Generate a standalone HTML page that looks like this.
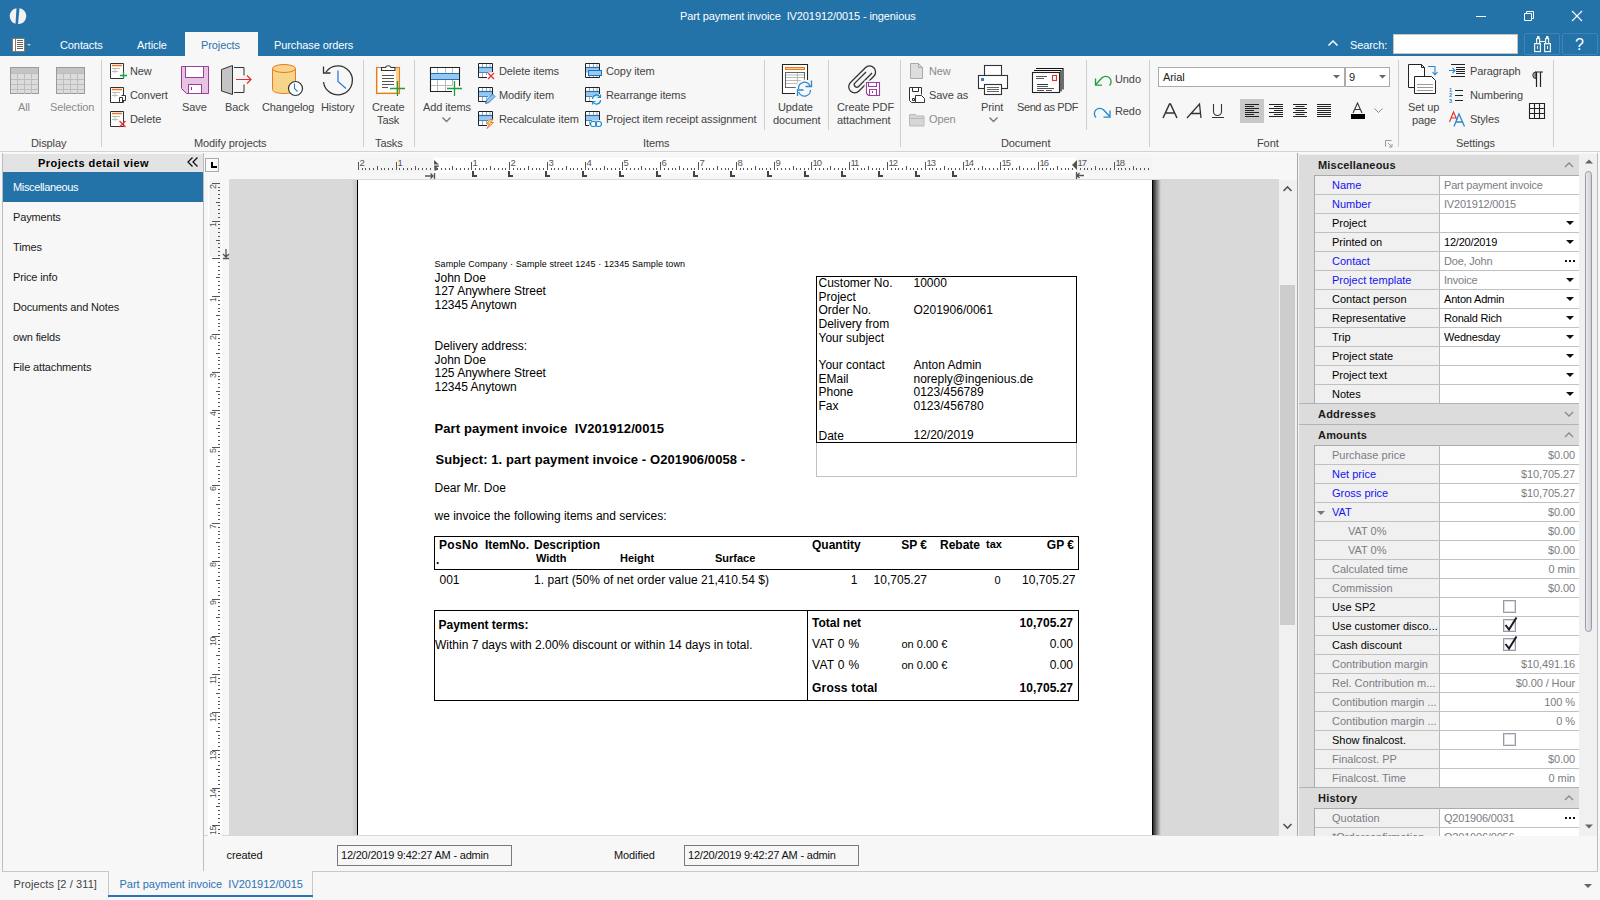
<!DOCTYPE html>
<html><head><meta charset="utf-8">
<style>
*{box-sizing:border-box;margin:0;padding:0}
html,body{width:1600px;height:900px;overflow:hidden;background:#f7f7f7;font-family:"Liberation Sans",sans-serif;font-size:11px;line-height:13px;color:#444;letter-spacing:-0.1px}
.a{position:absolute;white-space:nowrap}
svg{position:absolute;overflow:visible}
.w{color:#fff}
.sep{position:absolute;width:1px;background:#d0d0d0;top:60px}
.gl{position:absolute;top:137px;white-space:nowrap;color:#444}
.bk{color:#000}
</style></head><body>
<!-- ============ TITLE BAR ============ -->
<div class="a" style="left:0;top:0;width:1600px;height:56px;background:#2373a9"></div>
<svg style="left:10px;top:8px" width="16" height="16" viewBox="0 0 16 16"><path d="M6.5 0.2 A8 8 0 0 0 5.5 15.8 Z" fill="#f2f2f2"/><path d="M9.5 0.2 A8 8 0 0 1 10.5 15.8 L8 15.9 Z" fill="#f2f2f2"/></svg>
<div class="a w" style="left:680px;top:10px">Part payment invoice&nbsp; IV201912/0015 - ingenious</div>
<svg style="left:1476px;top:16px" width="10" height="1"><rect width="10" height="1" fill="#fff"/></svg>
<svg style="left:1524px;top:11px" width="10" height="10"><path d="M0.5 2.5h7v7h-7z M2.5 2.5v-2h7v7h-2" fill="none" stroke="#fff"/></svg>
<svg style="left:1572px;top:11px" width="10" height="10"><path d="M0 0L10 10M10 0L0 10" stroke="#fff" stroke-width="1.1"/></svg>
<!-- tabs -->
<svg style="left:12px;top:38px" width="20" height="14"><rect x="0.5" y="0.5" width="12" height="13" fill="#fff" stroke="#857a70"/><path d="M3.5 1v12" stroke="#857a70"/><path d="M5 2.5h6M5 4.5h6M5 6.5h6M5 8.5h6M5 10.5h6" stroke="#6a625a"/><path d="M15 6h4l-2 2z" fill="#d0c8c0"/></svg>
<div class="a" style="left:185px;top:32px;width:73px;height:24px;background:#f7f7f7"></div>
<div class="a w" style="left:60px;top:39px">Contacts</div>
<div class="a w" style="left:137px;top:39px">Article</div>
<div class="a" style="left:201px;top:39px;color:#2a72b0">Projects</div>
<div class="a w" style="left:274px;top:39px">Purchase orders</div>
<svg style="left:1328px;top:40px" width="10" height="6"><path d="M0.5 5.5L5 1L9.5 5.5" fill="none" stroke="#fff" stroke-width="1.5"/></svg>
<div class="a w" style="left:1350px;top:39px">Search:</div>
<div class="a" style="left:1393px;top:34px;width:125px;height:20px;background:#fff;border:1px solid #c9c3bd"></div>
<div class="a" style="left:1524px;top:33px;width:36px;height:22px;border:1px solid #4282b8;border-radius:2px"></div>
<div class="a" style="left:1562px;top:33px;width:36px;height:22px;border:1px solid #4282b8;border-radius:2px"></div>
<svg style="left:1534px;top:36px" width="17" height="16"><rect x="0.6" y="7.6" width="5.8" height="8" fill="none" stroke="#f4efe8" stroke-width="1.2"/><rect x="10.6" y="7.6" width="5.8" height="8" fill="none" stroke="#f4efe8" stroke-width="1.2"/><rect x="2.6" y="2.6" width="3" height="5" fill="none" stroke="#f4efe8" stroke-width="1.2"/><rect x="11.6" y="2.6" width="3" height="5" fill="none" stroke="#f4efe8" stroke-width="1.2"/><rect x="3" y="0" width="2.5" height="2" fill="#f4efe8"/><rect x="12" y="0" width="2.5" height="2" fill="#f4efe8"/><rect x="3" y="10" width="1" height="3" fill="#f4efe8"/><rect x="13" y="10" width="1" height="3" fill="#f4efe8"/><path d="M6 5.5h5" stroke="#f4efe8" stroke-width="1.1"/></svg>
<div class="a w" style="left:1575px;top:36px;font-size:16px;line-height:18px">?</div>

<!-- ============ RIBBON ============ -->
<div class="a" style="left:0;top:151px;width:1600px;height:1px;background:#d3d3d3"></div>
<div class="a" style="left:0;top:152px;width:1600px;height:1px;background:#fafafa"></div>
<!-- separators -->
<div class="sep" style="left:101px;height:87px"></div>
<div class="sep" style="left:363px;height:87px"></div>
<div class="sep" style="left:414px;height:87px"></div>
<div class="sep" style="left:764px;height:70px"></div>
<div class="sep" style="left:828px;height:70px"></div>
<div class="sep" style="left:900px;height:87px"></div>
<div class="sep" style="left:1086px;height:70px"></div>
<div class="sep" style="left:1149px;height:87px"></div>
<div class="sep" style="left:1398px;height:87px"></div>
<div class="sep" style="left:1553px;height:87px"></div>
<!-- group labels -->
<div class="gl" style="left:31px">Display</div>
<div class="gl" style="left:194px">Modify projects</div>
<div class="gl" style="left:375px">Tasks</div>
<div class="gl" style="left:643px">Items</div>
<div class="gl" style="left:1001px">Document</div>
<div class="gl" style="left:1257px">Font</div>
<div class="gl" style="left:1456px">Settings</div>
<svg style="left:1385px;top:140px" width="8" height="8"><path d="M0.5 6.5v-6h6" fill="none" stroke="#999"/><path d="M3 3l4 4M4 7h3v-3" fill="none" stroke="#999"/></svg>

<!-- Display -->
<svg style="left:10px;top:67px" width="29" height="28"><rect x="0.5" y="0.5" width="28" height="26" fill="#dcdcdc" stroke="#9a9a9a"/><rect x="1" y="1" width="27" height="5" fill="#c4c4c4"/><path d="M1 6.5h27M1 12.5h27M1 17.5h27M1 22.5h27M7.5 6v21M14.5 6v21M21.5 6v21" stroke="#bdbdbd"/></svg>
<svg style="left:56px;top:67px" width="29" height="28"><rect x="0.5" y="0.5" width="28" height="26" fill="#dcdcdc" stroke="#9a9a9a"/><rect x="1" y="1" width="27" height="5" fill="#c4c4c4"/><path d="M1 6.5h27M1 12.5h27M1 17.5h27M1 22.5h27M7.5 6v21M14.5 6v21M21.5 6v21" stroke="#bdbdbd"/></svg>
<div class="a" style="left:18px;top:101px;color:#8a8a8a">All</div>
<div class="a" style="left:50px;top:101px;color:#8a8a8a">Selection</div>

<!-- Modify projects small -->
<svg style="left:110px;top:63px" width="17" height="17"><path d="M0.5 0.5h13v15h-13z" fill="#fff" stroke="#333"/><path d="M2 2.5h10" stroke="#e8782a" stroke-width="1.5"/><path d="M2 5.5h8M2 8.5h6M5 5v5" stroke="#bbb"/><path d="M10 12.5h7M13.5 9v7" stroke="#1e9e3e" stroke-width="1.3"/></svg>
<svg style="left:110px;top:87px" width="17" height="17"><path d="M0.5 0.5h13v15h-13z" fill="#fff" stroke="#333"/><path d="M2 2.5h10" stroke="#e8782a" stroke-width="1.5"/><path d="M2 5.5h8M2 8.5h6M5 5v5" stroke="#bbb"/><path d="M9.5 10.5h3v5h-3z M11.5 8.5h4v5h-3" fill="#fff" stroke="#333"/></svg>
<svg style="left:110px;top:111px" width="17" height="17"><path d="M0.5 0.5h13v15h-13z" fill="#fff" stroke="#333"/><path d="M2 2.5h10" stroke="#e8782a" stroke-width="1.5"/><path d="M2 5.5h8M2 8.5h6M5 5v5" stroke="#bbb"/><path d="M9.5 10l6 6M15.5 10l-6 6" stroke="#e52b2b" stroke-width="1.2"/></svg>
<div class="a" style="left:130px;top:65px">New</div>
<div class="a" style="left:130px;top:89px">Convert</div>
<div class="a" style="left:130px;top:113px">Delete</div>
<!-- Save -->
<svg style="left:181px;top:66px" width="28" height="28"><path d="M0.5 0.5h27v27h-22l-5-5z" fill="#e6c4e2" stroke="#9b3d9b"/><rect x="4.5" y="0.5" width="18" height="11" fill="#fff" stroke="#9b3d9b"/><rect x="7.5" y="18.5" width="13" height="9" fill="#fff" stroke="#9b3d9b"/><path d="M10.5 21v3" stroke="#555"/></svg>
<div class="a" style="left:182px;top:101px">Save</div>
<!-- Back -->
<svg style="left:221px;top:65px" width="32" height="30"><path d="M0.5 4.5l11-4v29l-11-3.5z" fill="#c4c4c4" stroke="#333"/><path d="M13 2.5h10v8M23 19.5v8h-10" fill="none" stroke="#333"/><path d="M15 14.5h15M26 10.5l4 4l-4 4" fill="none" stroke="#e52b2b" stroke-width="1.2"/></svg>
<div class="a" style="left:225px;top:101px">Back</div>
<!-- Changelog -->
<svg style="left:272px;top:64px" width="32" height="32"><path d="M0.5 4.5v21c0 2.5 5 4 11.5 4s11.5-1.5 11.5-4v-21" fill="#f6d488" stroke="#e8782a"/><ellipse cx="12" cy="4.5" rx="11.5" ry="4" fill="#f6d488" stroke="#e8782a"/><circle cx="23.5" cy="24.5" r="7" fill="#fff" stroke="#333" stroke-width="1.2"/><path d="M22.5 19.5v5l3 3" fill="none" stroke="#2a7fd0" stroke-width="1.1"/></svg>
<div class="a" style="left:262px;top:101px">Changelog</div>
<!-- History -->
<svg style="left:322px;top:64px" width="32" height="32"><path d="M4 8A14.5 14.5 0 1 1 1.5 18" fill="none" stroke="#333" stroke-width="1.3"/><path d="M1.5 2.5v6.5h7" fill="none" stroke="#333" stroke-width="1.3"/><path d="M16 6.5v11l8 7" fill="none" stroke="#2a7fd0" stroke-width="1.3"/></svg>
<div class="a" style="left:321px;top:101px">History</div>
<!-- Create Task -->
<svg style="left:370px;top:58px" width="40" height="42"><rect x="6.5" y="9.5" width="23" height="26" fill="#f6d488" stroke="#e8782a" stroke-width="1.1"/><rect x="8" y="10" width="18" height="24" fill="#fff"/><path d="M11.5 12.5v-3h4a3 3 0 0 1 5.5 0h4v3z" fill="#fff" stroke="#333" stroke-width="1.1"/><path d="M12 17.5h12M12 20.5h12M12 23.5h12M12 26.5h12M12 29.5h6" stroke="#555"/><rect x="18" y="28" width="10" height="10" fill="#fff" opacity="0"/><path d="M20 30.5h15M27.5 23v15" stroke="#1e9e3e" stroke-width="1.3"/></svg>
<div class="a" style="left:372px;top:101px">Create</div>
<div class="a" style="left:377px;top:114px">Task</div>
<!-- Add items -->
<svg style="left:430px;top:67px" width="34" height="32"><path d="M22 24.5H0.5V0.5H29.5V19" fill="#fff" stroke="#222" stroke-width="1.1"/><path d="M7.5 1v5M15.5 1v5M22.5 1v5M7.5 13v11M15.5 13v11M22.5 13v6M1 18.5h22" stroke="#bbb"/><rect x="1" y="6.5" width="28" height="6" fill="#99c8ee"/><path d="M1 6.5h28M1 12.5h28" stroke="#1e72c0" stroke-width="1.2"/><path d="M17 21.5h15M24.5 14v15" stroke="#1e9e3e" stroke-width="1.3"/></svg>
<div class="a" style="left:423px;top:101px">Add items</div>
<svg style="left:442px;top:117px" width="9" height="6"><path d="M0.5 0.5l4 4l4-4" fill="none" stroke="#777" stroke-width="1.4"/></svg>
<!-- items small icons -->
<svg style="left:478px;top:63px" width="17" height="17"><path d="M9 14.5H0.5V0.5H14.5V9" fill="#fff" stroke="#222"/><path d="M4.5 1v3M8.5 1v3M12 1v3M4.5 10v4M8.5 10v2" stroke="#aaa"/><rect x="1" y="4.5" width="13" height="5" fill="#99c8ee"/><path d="M1 4.5h13" stroke="#1e72c0" stroke-width="1.2"/><path d="M1 9.5h9" stroke="#1e72c0" stroke-width="0.8"/><path d="M10 10l6 6M16 10l-6 6" stroke="#e52b2b" stroke-width="1.2"/></svg>
<svg style="left:478px;top:87px" width="17" height="17"><path d="M9 14.5H0.5V0.5H14.5V9" fill="#fff" stroke="#222"/><path d="M4.5 1v3M8.5 1v3M12 1v3M4.5 10v4M8.5 10v2" stroke="#aaa"/><rect x="1" y="4.5" width="13" height="5" fill="#99c8ee"/><path d="M1 4.5h13" stroke="#1e72c0" stroke-width="1.2"/><path d="M1 9.5h9" stroke="#1e72c0" stroke-width="0.8"/><path d="M7.5 16.5l1-3.5l6-6l2.5 2.5l-6 6z" fill="#99c8ee" stroke="#1e72c0" stroke-width="0.9"/></svg>
<svg style="left:478px;top:111px" width="17" height="17"><path d="M9 14.5H0.5V0.5H14.5V9" fill="#fff" stroke="#222"/><path d="M4.5 1v3M8.5 1v3M12 1v3M4.5 10v4M8.5 10v2" stroke="#aaa"/><rect x="1" y="4.5" width="13" height="5" fill="#99c8ee"/><path d="M1 4.5h13" stroke="#1e72c0" stroke-width="1.2"/><path d="M1 9.5h9" stroke="#1e72c0" stroke-width="0.8"/><path d="M12 8.5l-3.5 4.5h3l-2.5 4.5l6.5-6h-3l2.5-3z" fill="#f6d488" stroke="#e8782a" stroke-width="0.9"/></svg>
<div class="a" style="left:499px;top:65px">Delete items</div>
<div class="a" style="left:499px;top:89px">Modify item</div>
<div class="a" style="left:499px;top:113px">Recalculate item</div>
<svg style="left:585px;top:63px" width="18" height="17"><path d="M0.5 0.5H14.5V14.5H0.5Z" fill="#fff" stroke="#222"/><path d="M4.5 1v3M8.5 1v3M12 1v3M4.5 11v3M8.5 12v2M12 12v2" stroke="#aaa"/><rect x="1" y="4.5" width="13" height="5" fill="#99c8ee"/><path d="M1 4.5h13" stroke="#1e72c0" stroke-width="1.2"/><rect x="3.5" y="7.5" width="13" height="5" fill="#99c8ee" stroke="#1e72c0"/></svg>
<svg style="left:585px;top:87px" width="18" height="17"><path d="M7 14.5H0.5V0.5H14.5V7" fill="#fff" stroke="#222"/><path d="M4.5 1v3M8.5 1v3M12 1v3M4.5 10v4" stroke="#aaa"/><rect x="1" y="4.5" width="13" height="5" fill="#99c8ee"/><path d="M1 4.5h13" stroke="#1e72c0" stroke-width="1.2"/><path d="M1 9.5h6" stroke="#1e72c0" stroke-width="0.8"/><path d="M7.5 12A4 4 0 0 1 15 10" fill="none" stroke="#1e88d0" stroke-width="1.2"/><path d="M12.5 10.5h3v-3" fill="none" stroke="#1e88d0" stroke-width="1.1"/><path d="M15.5 13A4 4 0 0 1 8 15" fill="none" stroke="#1e88d0" stroke-width="1.2"/><path d="M10.5 14.5h-3v3" fill="none" stroke="#1e88d0" stroke-width="1.1"/></svg>
<svg style="left:585px;top:111px" width="18" height="17"><path d="M4 14.5H0.5V0.5H14.5V9" fill="#fff" stroke="#222"/><path d="M4.5 1v3M8.5 1v3M12 1v3M4.5 10v4" stroke="#aaa"/><rect x="1" y="4.5" width="13" height="5" fill="#99c8ee"/><path d="M1 4.5h13" stroke="#1e72c0" stroke-width="1.2"/><path d="M1 9.5h6" stroke="#1e72c0" stroke-width="0.8"/><rect x="5.5" y="10.5" width="6" height="5" rx="2.5" fill="#fff" stroke="#1e88d0" stroke-width="1.1"/><rect x="10.5" y="10.5" width="6" height="5" rx="2.5" fill="none" stroke="#1e88d0" stroke-width="1.1"/></svg>
<div class="a" style="left:606px;top:65px">Copy item</div>
<div class="a" style="left:606px;top:89px">Rearrange items</div>
<div class="a" style="left:606px;top:113px">Project item receipt assignment</div>
<!-- Update document -->
<svg style="left:782px;top:64px" width="32" height="33"><path d="M13 29.5H0.5V0.5H25.5V16" fill="#fff" stroke="#222" stroke-width="1.1"/><rect x="1" y="1" width="24" height="28" fill="#fff"/><rect x="3.5" y="3.5" width="19" height="2" fill="#f6d488" stroke="#e8782a"/><rect x="3.5" y="8.5" width="19" height="15" fill="#fff" stroke="#666"/><path d="M4 11h18M4 13.5h18M4 16.5h18M4 19.5h18M15.5 9v14" stroke="#bbb"/><circle cx="22.5" cy="24.5" r="9" fill="#f7f7f7"/><path d="M16.5 25A6 6 0 0 1 28.2 22.5" fill="none" stroke="#2a88d0" stroke-width="1.3"/><path d="M23.5 22.5H29.5V16.5" fill="none" stroke="#2a88d0" stroke-width="1.3"/><path d="M28.5 26A6 6 0 0 1 16.8 28" fill="none" stroke="#2a88d0" stroke-width="1.3"/><path d="M15.5 32V26H21.5" fill="none" stroke="#2a88d0" stroke-width="1.3"/></svg>
<div class="a" style="left:778px;top:101px">Update</div>
<div class="a" style="left:773px;top:114px">document</div>
<!-- Create PDF attachment -->
<svg style="left:850px;top:64px" width="32" height="33"><g transform="translate(12.5,15) rotate(45) translate(-6.5,-16.5)"><rect x="0.5" y="0.5" width="12" height="33" rx="6" fill="none" stroke="#333" stroke-width="1.3"/><path d="M4 9V24.5A2.5 2.5 0 0 0 9 24.5V5.5" fill="none" stroke="#333" stroke-width="1.3"/></g><path d="M15.5 17.5h14.5v14.5h-12.5l-2-2z" fill="#f7f7f7" stroke="#f7f7f7" stroke-width="2"/><path d="M16.5 18.5h13v13h-11l-2-2z" fill="#fff" stroke="#9b3d9b" stroke-width="1.1"/><rect x="18.5" y="18.5" width="8" height="4" fill="none" stroke="#9b3d9b"/><rect x="19.5" y="25.5" width="7" height="6" fill="none" stroke="#9b3d9b"/><rect x="22" y="27" width="1" height="2" fill="#9b3d9b"/></svg>
<div class="a" style="left:837px;top:101px">Create PDF</div>
<div class="a" style="left:837px;top:114px">attachment</div>
<!-- Document small -->
<svg style="left:910px;top:63px" width="17" height="17"><path d="M0.5 0.5h8l4 4v11h-12z" fill="#ddd" stroke="#aaa"/><path d="M8.5 0.5v4h4" fill="none" stroke="#aaa"/></svg>
<svg style="left:909px;top:87px" width="17" height="17"><path d="M0.5 0.5h12v7M0.5 0.5v13l2 2h4" fill="#fff" stroke="#333"/><path d="M3.5 0.5v4h6v-4" fill="none" stroke="#333"/><path d="M6.5 8.5h6l3 3v4h-9z" fill="#fff" stroke="#333"/><path d="M3.5 11.5h2v2h-2z" fill="none" stroke="#333"/></svg>
<svg style="left:909px;top:111px" width="17" height="17"><path d="M0.5 3.5h6l1.5 1.5h7v10h-14.5z" fill="#d6d6d6" stroke="#bbb"/><path d="M0.5 7.5h14.5" stroke="#bbb"/></svg>
<div class="a" style="left:929px;top:65px;color:#8a8a8a">New</div>
<div class="a" style="left:929px;top:89px">Save as</div>
<div class="a" style="left:929px;top:113px;color:#8a8a8a">Open</div>
<!-- Print -->
<svg style="left:978px;top:65px" width="31" height="31"><rect x="6.5" y="0.5" width="17" height="10" fill="#fff" stroke="#333" stroke-width="1.1"/><rect x="0.5" y="10.5" width="29" height="13" fill="#fff" stroke="#333" stroke-width="1.1"/><rect x="3" y="13" width="3" height="3" fill="#2a7fd0"/><rect x="6.5" y="19.5" width="17" height="10" fill="#fff" stroke="#333" stroke-width="1.1"/><path d="M9 22.5h12M9 24.5h12M9 26.5h12" stroke="#666"/></svg>
<div class="a" style="left:981px;top:101px">Print</div>
<svg style="left:989px;top:117px" width="9" height="6"><path d="M0.5 0.5l4 4l4-4" fill="none" stroke="#777" stroke-width="1.4"/></svg>
<!-- Send as PDF -->
<svg style="left:1031px;top:66px" width="34" height="28"><path d="M5 2.5h27v21" fill="none" stroke="#111" stroke-width="1.2"/><path d="M3 4.5h27v21" fill="none" stroke="#111" stroke-width="1.2"/><rect x="1.5" y="6.5" width="27" height="20" fill="#fff" stroke="#222" stroke-width="1.1"/><path d="M5 10.5h11M5 12.5h8M6 20.5h11M6 22.5h17M6 24.5h7M15 24.5h6" stroke="#555"/><path d="M6 18.5h11" stroke="#333"/><rect x="21.5" y="9.5" width="4" height="5" fill="none" stroke="#e52b2b" stroke-width="1.1"/></svg>
<div class="a" style="left:1017px;top:101px;letter-spacing:-0.4px">Send as PDF</div>
<!-- Undo/Redo -->
<svg style="left:1094px;top:74px" width="18" height="14"><path d="M15.5 11.5A4.6 4.6 0 0 0 8 3.8L1.8 10.5" fill="none" stroke="#1e9e3e" stroke-width="1.3"/><path d="M1.5 4.5V11.2H8" fill="none" stroke="#1e9e3e" stroke-width="1.3"/></svg>
<svg style="left:1094px;top:106px" width="18" height="14"><path d="M2 11.5A4.6 4.6 0 0 1 9.5 3.8L15.7 10.5" fill="none" stroke="#1e88d0" stroke-width="1.3"/><path d="M16 4.5V11.2H9.5" fill="none" stroke="#1e88d0" stroke-width="1.3"/></svg>
<div class="a" style="left:1115px;top:73px">Undo</div>
<div class="a" style="left:1115px;top:105px">Redo</div>
<!-- Font group -->
<div class="a" style="left:1158px;top:67px;width:187px;height:20px;background:#fff;border:1px solid #ababab"></div>
<div class="a" style="left:1345px;top:67px;width:45px;height:20px;background:#fff;border:1px solid #ababab"></div>
<div class="a" style="left:1163px;top:71px;color:#222">Arial</div>
<div class="a" style="left:1349px;top:71px;color:#222">9</div>
<svg style="left:1333px;top:75px" width="7" height="4"><path d="M0 0h7l-3.5 3.5z" fill="#666"/></svg>
<svg style="left:1379px;top:75px" width="7" height="4"><path d="M0 0h7l-3.5 3.5z" fill="#666"/></svg>
<div class="a" style="left:1240px;top:99px;width:24px;height:24px;background:#c8c8c8"></div>
<svg style="left:1162px;top:103px" width="16" height="16"><path d="M1 15L7.5 1h1L15 15M4 10h8" fill="none" stroke="#333" stroke-width="1.5"/></svg>
<svg style="left:1186px;top:103px" width="16" height="16"><path d="M1 15L13.5 1L15 15M5 10.5h9" fill="none" stroke="#333" stroke-width="1.3"/></svg>
<svg style="left:1211px;top:104px" width="14" height="15"><path d="M2.5 0v7.5a4 4 0 0 0 8 0v-7.5" fill="none" stroke="#333" stroke-width="1.1"/><path d="M1 13.5h12" stroke="#333"/></svg>
<svg style="left:1245px;top:104px" width="15" height="13"><path d="M0 0.5h14M0 2.5h9M0 4.5h14M0 6.5h9M0 8.5h14M0 10.5h9M0 12.5h14" stroke="#222"/></svg>
<svg style="left:1269px;top:104px" width="15" height="13"><path d="M0 0.5h14M5 2.5h9M0 4.5h14M5 6.5h9M0 8.5h14M5 10.5h9M0 12.5h14" stroke="#222"/></svg>
<svg style="left:1293px;top:104px" width="15" height="13"><path d="M0 0.5h14M2.5 2.5h9M0 4.5h14M2.5 6.5h9M0 8.5h14M2.5 10.5h9M0 12.5h14" stroke="#222"/></svg>
<svg style="left:1317px;top:104px" width="15" height="13"><path d="M0 0.5h14M0 2.5h14M0 4.5h14M0 6.5h14M0 8.5h14M0 10.5h14M0 12.5h14" stroke="#222"/></svg>
<svg style="left:1350px;top:102px" width="16" height="18"><path d="M3 11L7.5 1L12 11M5 7.5h5" fill="none" stroke="#333" stroke-width="1.1"/><rect x="1" y="12" width="14" height="5" fill="#000"/></svg>
<svg style="left:1374px;top:108px" width="9" height="5"><path d="M0.5 0.5l4 4l4-4" fill="none" stroke="#888"/></svg>
<!-- Settings -->
<svg style="left:1408px;top:64px" width="32" height="32"><path d="M0.5 0.5h13l3 3v20h-16z" fill="#fff" stroke="#222"/><path d="M13.5 0.5v3h3" fill="none" stroke="#222"/><path d="M6.5 12.5h17l4 4v13h-21z" fill="#fff" stroke="#222"/><path d="M9 20.5h16M9 23.5h16M9 26.5h16" stroke="#999"/><path d="M20 2.5h7v8M24.5 8l2.5 3l2.5-3" fill="none" stroke="#2a88d0" stroke-width="1.1"/></svg>
<div class="a" style="left:1408px;top:101px">Set up</div>
<div class="a" style="left:1412px;top:114px">page</div>
<svg style="left:1449px;top:63px" width="17" height="15"><path d="M2 1.5h14M7 4.5h9M7 6.5h9M7 8.5h9M7 10.5h9M2 13.5h14" stroke="#222"/><path d="M0 7.5h6M3.5 5l2.5 2.5l-2.5 2.5" fill="none" stroke="#2a88d0" stroke-width="1.1"/></svg>
<svg style="left:1449px;top:87px" width="16" height="16"><path d="M6 3.5h8M6 8.5h8M6 13.5h8" stroke="#222" stroke-width="1.2"/><text x="0" y="5" font-size="5.5" fill="#2a88d0" font-family="Liberation Sans" font-weight="bold">1</text><text x="0" y="10" font-size="5.5" fill="#2a88d0" font-family="Liberation Sans" font-weight="bold">2</text><text x="0" y="15.5" font-size="5.5" fill="#2a88d0" font-family="Liberation Sans" font-weight="bold">3</text></svg>
<svg style="left:1449px;top:111px" width="17" height="16"><path d="M0.5 11L4.5 1L8 9M2 7h5" fill="none" stroke="#e52b2b" stroke-width="1.1"/><path d="M5 15.5L10 3L15.5 15.5M7 11h7" fill="none" stroke="#2a88d0" stroke-width="1.3"/></svg>
<div class="a" style="left:1470px;top:65px">Paragraph</div>
<div class="a" style="left:1470px;top:89px">Numbering</div>
<div class="a" style="left:1470px;top:113px">Styles</div>
<svg style="left:1531px;top:71px" width="13" height="17"><path d="M4 1h8M5.5 1v15M9.5 1v15" fill="none" stroke="#222" stroke-width="1.2"/><path d="M5 1a3.3 3.3 0 0 0 0 6.6z" fill="#999" stroke="#222" stroke-width="0.8"/></svg>
<svg style="left:1529px;top:103px" width="16" height="16"><path d="M0.5 0.5h15v15h-15zM5.5 0.5v15M10.5 0.5v15M0.5 5.5h15M0.5 10.5h15" fill="none" stroke="#222" stroke-width="1.1"/></svg>
<div class="a" style="left:2px;top:153px;width:1px;height:718px;background:#bdbdbd;"></div>
<div class="a" style="left:203px;top:153px;width:1px;height:718px;background:#bdbdbd;"></div>
<div class="a" style="left:3px;top:154px;width:200px;height:18px;background:#e3e3e3;"></div>
<div class="a" style="left:3px;top:172px;width:200px;height:30px;background:#2373a9;"></div>
<div class="a" style="left:38px;top:163px;font-size:11px;line-height:0;color:#000;font-weight:bold;letter-spacing:0.45px">Projects detail view</div>
<svg style="left:187px;top:157px" width="12" height="11"><path d="M5.5 0.5L1 5L5.5 9.5M10.5 0.5L6 5L10.5 9.5" fill="none" stroke="#111" stroke-width="1.3"/></svg>
<div class="a" style="left:13px;top:187.19px;font-size:11px;line-height:0;color:#fff;letter-spacing:-0.35px">Miscellaneous</div>
<div class="a" style="left:13px;top:217.19px;font-size:11px;line-height:0;color:#1a1a1a;letter-spacing:-0.15px">Payments</div>
<div class="a" style="left:13px;top:247.19px;font-size:11px;line-height:0;color:#1a1a1a;letter-spacing:-0.15px">Times</div>
<div class="a" style="left:13px;top:277.19px;font-size:11px;line-height:0;color:#1a1a1a;letter-spacing:-0.15px">Price info</div>
<div class="a" style="left:13px;top:307.19px;font-size:11px;line-height:0;color:#1a1a1a;letter-spacing:-0.15px">Documents and Notes</div>
<div class="a" style="left:13px;top:337.19px;font-size:11px;line-height:0;color:#1a1a1a;letter-spacing:-0.15px">own fields</div>
<div class="a" style="left:13px;top:367.19px;font-size:11px;line-height:0;color:#1a1a1a;letter-spacing:-0.15px">File attachments</div>
<div class="a" style="left:205px;top:158px;width:14px;height:14px;border:1px solid #a8a8a8;background:#fafafa"></div>
<svg style="left:211px;top:162px" width="6" height="6"><path d="M0 0h2v4h4v2h-6z" fill="#000"/></svg>
<div class="a" style="left:229px;top:179px;width:1050px;height:656px;background:#d9d9d9;"></div>
<div class="a" style="left:204px;top:835px;width:1093px;height:1px;background:#d8d8d8;"></div>
<div class="a" style="left:351px;top:180px;width:6px;height:655px;background:linear-gradient(90deg,#d9d9d9,#c8c8c8)"></div>
<div class="a" style="left:358px;top:180px;width:794px;height:655px;background:#fff;"></div>
<div class="a" style="left:357px;top:180px;width:1px;height:655px;background:#000;"></div>
<div class="a" style="left:1152px;top:180px;width:1px;height:655px;background:#000;"></div>
<div class="a" style="left:1153px;top:180px;width:8px;height:655px;background:linear-gradient(90deg,#2a2a2a,#d9d9d9)"></div>
<div class="a" style="left:1279px;top:180px;width:18px;height:656px;background:#f0f0f0;"></div>
<div class="a" style="left:1280px;top:285px;width:15px;height:340px;background:#cdcdcd;"></div>
<svg style="left:1283px;top:186px" width="9" height="6"><path d="M0.5 5L4.5 1L8.5 5" fill="none" stroke="#555" stroke-width="1.6"/></svg>
<svg style="left:1283px;top:823px" width="9" height="6"><path d="M0.5 1L4.5 5L8.5 1" fill="none" stroke="#555" stroke-width="1.6"/></svg>
<div class="a" style="left:1297px;top:153px;width:1px;height:683px;background:#a6a6b2;"></div>
<div class="a" style="left:1298px;top:153px;width:1px;height:683px;background:#f4f4f4;"></div>
<div class="a" style="left:358px;top:158px;width:794px;height:15px;background:#f4f4f4;"></div>
<div class="a" style="left:433px;top:158px;width:643px;height:15px;background:#fff;"></div>
<svg style="left:0;top:0" width="1600" height="900">
<rect x="358" y="162" width="1" height="8" fill="#555"/>
<rect x="362" y="168" width="1" height="2" fill="#555"/>
<rect x="365" y="168" width="1" height="2" fill="#555"/>
<rect x="369" y="168" width="1" height="2" fill="#555"/>
<rect x="373" y="168" width="1" height="2" fill="#555"/>
<rect x="377" y="166" width="1" height="4" fill="#555"/>
<rect x="381" y="168" width="1" height="2" fill="#555"/>
<rect x="384" y="168" width="1" height="2" fill="#555"/>
<rect x="388" y="168" width="1" height="2" fill="#555"/>
<rect x="392" y="168" width="1" height="2" fill="#555"/>
<rect x="396" y="162" width="1" height="8" fill="#555"/>
<rect x="399" y="168" width="1" height="2" fill="#555"/>
<rect x="403" y="168" width="1" height="2" fill="#555"/>
<rect x="407" y="168" width="1" height="2" fill="#555"/>
<rect x="411" y="168" width="1" height="2" fill="#555"/>
<rect x="415" y="166" width="1" height="4" fill="#555"/>
<rect x="418" y="168" width="1" height="2" fill="#555"/>
<rect x="422" y="168" width="1" height="2" fill="#555"/>
<rect x="426" y="168" width="1" height="2" fill="#555"/>
<rect x="430" y="168" width="1" height="2" fill="#555"/>
<rect x="437" y="168" width="1" height="2" fill="#555"/>
<rect x="441" y="168" width="1" height="2" fill="#555"/>
<rect x="445" y="168" width="1" height="2" fill="#555"/>
<rect x="449" y="168" width="1" height="2" fill="#555"/>
<rect x="452" y="166" width="1" height="4" fill="#555"/>
<rect x="456" y="168" width="1" height="2" fill="#555"/>
<rect x="460" y="168" width="1" height="2" fill="#555"/>
<rect x="464" y="168" width="1" height="2" fill="#555"/>
<rect x="468" y="168" width="1" height="2" fill="#555"/>
<rect x="471" y="162" width="1" height="8" fill="#555"/>
<rect x="475" y="168" width="1" height="2" fill="#555"/>
<rect x="479" y="168" width="1" height="2" fill="#555"/>
<rect x="483" y="168" width="1" height="2" fill="#555"/>
<rect x="486" y="168" width="1" height="2" fill="#555"/>
<rect x="490" y="166" width="1" height="4" fill="#555"/>
<rect x="494" y="168" width="1" height="2" fill="#555"/>
<rect x="498" y="168" width="1" height="2" fill="#555"/>
<rect x="502" y="168" width="1" height="2" fill="#555"/>
<rect x="505" y="168" width="1" height="2" fill="#555"/>
<rect x="509" y="162" width="1" height="8" fill="#555"/>
<rect x="513" y="168" width="1" height="2" fill="#555"/>
<rect x="517" y="168" width="1" height="2" fill="#555"/>
<rect x="520" y="168" width="1" height="2" fill="#555"/>
<rect x="524" y="168" width="1" height="2" fill="#555"/>
<rect x="528" y="166" width="1" height="4" fill="#555"/>
<rect x="532" y="168" width="1" height="2" fill="#555"/>
<rect x="536" y="168" width="1" height="2" fill="#555"/>
<rect x="539" y="168" width="1" height="2" fill="#555"/>
<rect x="543" y="168" width="1" height="2" fill="#555"/>
<rect x="547" y="162" width="1" height="8" fill="#555"/>
<rect x="551" y="168" width="1" height="2" fill="#555"/>
<rect x="554" y="168" width="1" height="2" fill="#555"/>
<rect x="558" y="168" width="1" height="2" fill="#555"/>
<rect x="562" y="168" width="1" height="2" fill="#555"/>
<rect x="566" y="166" width="1" height="4" fill="#555"/>
<rect x="570" y="168" width="1" height="2" fill="#555"/>
<rect x="573" y="168" width="1" height="2" fill="#555"/>
<rect x="577" y="168" width="1" height="2" fill="#555"/>
<rect x="581" y="168" width="1" height="2" fill="#555"/>
<rect x="585" y="162" width="1" height="8" fill="#555"/>
<rect x="588" y="168" width="1" height="2" fill="#555"/>
<rect x="592" y="168" width="1" height="2" fill="#555"/>
<rect x="596" y="168" width="1" height="2" fill="#555"/>
<rect x="600" y="168" width="1" height="2" fill="#555"/>
<rect x="604" y="166" width="1" height="4" fill="#555"/>
<rect x="607" y="168" width="1" height="2" fill="#555"/>
<rect x="611" y="168" width="1" height="2" fill="#555"/>
<rect x="615" y="168" width="1" height="2" fill="#555"/>
<rect x="619" y="168" width="1" height="2" fill="#555"/>
<rect x="622" y="162" width="1" height="8" fill="#555"/>
<rect x="626" y="168" width="1" height="2" fill="#555"/>
<rect x="630" y="168" width="1" height="2" fill="#555"/>
<rect x="634" y="168" width="1" height="2" fill="#555"/>
<rect x="638" y="168" width="1" height="2" fill="#555"/>
<rect x="641" y="166" width="1" height="4" fill="#555"/>
<rect x="645" y="168" width="1" height="2" fill="#555"/>
<rect x="649" y="168" width="1" height="2" fill="#555"/>
<rect x="653" y="168" width="1" height="2" fill="#555"/>
<rect x="656" y="168" width="1" height="2" fill="#555"/>
<rect x="660" y="162" width="1" height="8" fill="#555"/>
<rect x="664" y="168" width="1" height="2" fill="#555"/>
<rect x="668" y="168" width="1" height="2" fill="#555"/>
<rect x="672" y="168" width="1" height="2" fill="#555"/>
<rect x="675" y="168" width="1" height="2" fill="#555"/>
<rect x="679" y="166" width="1" height="4" fill="#555"/>
<rect x="683" y="168" width="1" height="2" fill="#555"/>
<rect x="687" y="168" width="1" height="2" fill="#555"/>
<rect x="691" y="168" width="1" height="2" fill="#555"/>
<rect x="694" y="168" width="1" height="2" fill="#555"/>
<rect x="698" y="162" width="1" height="8" fill="#555"/>
<rect x="702" y="168" width="1" height="2" fill="#555"/>
<rect x="706" y="168" width="1" height="2" fill="#555"/>
<rect x="709" y="168" width="1" height="2" fill="#555"/>
<rect x="713" y="168" width="1" height="2" fill="#555"/>
<rect x="717" y="166" width="1" height="4" fill="#555"/>
<rect x="721" y="168" width="1" height="2" fill="#555"/>
<rect x="725" y="168" width="1" height="2" fill="#555"/>
<rect x="728" y="168" width="1" height="2" fill="#555"/>
<rect x="732" y="168" width="1" height="2" fill="#555"/>
<rect x="736" y="162" width="1" height="8" fill="#555"/>
<rect x="740" y="168" width="1" height="2" fill="#555"/>
<rect x="743" y="168" width="1" height="2" fill="#555"/>
<rect x="747" y="168" width="1" height="2" fill="#555"/>
<rect x="751" y="168" width="1" height="2" fill="#555"/>
<rect x="755" y="166" width="1" height="4" fill="#555"/>
<rect x="759" y="168" width="1" height="2" fill="#555"/>
<rect x="762" y="168" width="1" height="2" fill="#555"/>
<rect x="766" y="168" width="1" height="2" fill="#555"/>
<rect x="770" y="168" width="1" height="2" fill="#555"/>
<rect x="774" y="162" width="1" height="8" fill="#555"/>
<rect x="777" y="168" width="1" height="2" fill="#555"/>
<rect x="781" y="168" width="1" height="2" fill="#555"/>
<rect x="785" y="168" width="1" height="2" fill="#555"/>
<rect x="789" y="168" width="1" height="2" fill="#555"/>
<rect x="793" y="166" width="1" height="4" fill="#555"/>
<rect x="796" y="168" width="1" height="2" fill="#555"/>
<rect x="800" y="168" width="1" height="2" fill="#555"/>
<rect x="804" y="168" width="1" height="2" fill="#555"/>
<rect x="808" y="168" width="1" height="2" fill="#555"/>
<rect x="811" y="162" width="1" height="8" fill="#555"/>
<rect x="815" y="168" width="1" height="2" fill="#555"/>
<rect x="819" y="168" width="1" height="2" fill="#555"/>
<rect x="823" y="168" width="1" height="2" fill="#555"/>
<rect x="827" y="168" width="1" height="2" fill="#555"/>
<rect x="830" y="166" width="1" height="4" fill="#555"/>
<rect x="834" y="168" width="1" height="2" fill="#555"/>
<rect x="838" y="168" width="1" height="2" fill="#555"/>
<rect x="842" y="168" width="1" height="2" fill="#555"/>
<rect x="845" y="168" width="1" height="2" fill="#555"/>
<rect x="849" y="162" width="1" height="8" fill="#555"/>
<rect x="853" y="168" width="1" height="2" fill="#555"/>
<rect x="857" y="168" width="1" height="2" fill="#555"/>
<rect x="861" y="168" width="1" height="2" fill="#555"/>
<rect x="864" y="168" width="1" height="2" fill="#555"/>
<rect x="868" y="166" width="1" height="4" fill="#555"/>
<rect x="872" y="168" width="1" height="2" fill="#555"/>
<rect x="876" y="168" width="1" height="2" fill="#555"/>
<rect x="879" y="168" width="1" height="2" fill="#555"/>
<rect x="883" y="168" width="1" height="2" fill="#555"/>
<rect x="887" y="162" width="1" height="8" fill="#555"/>
<rect x="891" y="168" width="1" height="2" fill="#555"/>
<rect x="895" y="168" width="1" height="2" fill="#555"/>
<rect x="898" y="168" width="1" height="2" fill="#555"/>
<rect x="902" y="168" width="1" height="2" fill="#555"/>
<rect x="906" y="166" width="1" height="4" fill="#555"/>
<rect x="910" y="168" width="1" height="2" fill="#555"/>
<rect x="913" y="168" width="1" height="2" fill="#555"/>
<rect x="917" y="168" width="1" height="2" fill="#555"/>
<rect x="921" y="168" width="1" height="2" fill="#555"/>
<rect x="925" y="162" width="1" height="8" fill="#555"/>
<rect x="929" y="168" width="1" height="2" fill="#555"/>
<rect x="932" y="168" width="1" height="2" fill="#555"/>
<rect x="936" y="168" width="1" height="2" fill="#555"/>
<rect x="940" y="168" width="1" height="2" fill="#555"/>
<rect x="944" y="166" width="1" height="4" fill="#555"/>
<rect x="948" y="168" width="1" height="2" fill="#555"/>
<rect x="951" y="168" width="1" height="2" fill="#555"/>
<rect x="955" y="168" width="1" height="2" fill="#555"/>
<rect x="959" y="168" width="1" height="2" fill="#555"/>
<rect x="963" y="162" width="1" height="8" fill="#555"/>
<rect x="966" y="168" width="1" height="2" fill="#555"/>
<rect x="970" y="168" width="1" height="2" fill="#555"/>
<rect x="974" y="168" width="1" height="2" fill="#555"/>
<rect x="978" y="168" width="1" height="2" fill="#555"/>
<rect x="982" y="166" width="1" height="4" fill="#555"/>
<rect x="985" y="168" width="1" height="2" fill="#555"/>
<rect x="989" y="168" width="1" height="2" fill="#555"/>
<rect x="993" y="168" width="1" height="2" fill="#555"/>
<rect x="997" y="168" width="1" height="2" fill="#555"/>
<rect x="1000" y="162" width="1" height="8" fill="#555"/>
<rect x="1004" y="168" width="1" height="2" fill="#555"/>
<rect x="1008" y="168" width="1" height="2" fill="#555"/>
<rect x="1012" y="168" width="1" height="2" fill="#555"/>
<rect x="1016" y="168" width="1" height="2" fill="#555"/>
<rect x="1019" y="166" width="1" height="4" fill="#555"/>
<rect x="1023" y="168" width="1" height="2" fill="#555"/>
<rect x="1027" y="168" width="1" height="2" fill="#555"/>
<rect x="1031" y="168" width="1" height="2" fill="#555"/>
<rect x="1034" y="168" width="1" height="2" fill="#555"/>
<rect x="1038" y="162" width="1" height="8" fill="#555"/>
<rect x="1042" y="168" width="1" height="2" fill="#555"/>
<rect x="1046" y="168" width="1" height="2" fill="#555"/>
<rect x="1050" y="168" width="1" height="2" fill="#555"/>
<rect x="1053" y="168" width="1" height="2" fill="#555"/>
<rect x="1057" y="166" width="1" height="4" fill="#555"/>
<rect x="1061" y="168" width="1" height="2" fill="#555"/>
<rect x="1065" y="168" width="1" height="2" fill="#555"/>
<rect x="1068" y="168" width="1" height="2" fill="#555"/>
<rect x="1072" y="168" width="1" height="2" fill="#555"/>
<rect x="1080" y="168" width="1" height="2" fill="#555"/>
<rect x="1084" y="168" width="1" height="2" fill="#555"/>
<rect x="1087" y="168" width="1" height="2" fill="#555"/>
<rect x="1091" y="168" width="1" height="2" fill="#555"/>
<rect x="1095" y="166" width="1" height="4" fill="#555"/>
<rect x="1099" y="168" width="1" height="2" fill="#555"/>
<rect x="1102" y="168" width="1" height="2" fill="#555"/>
<rect x="1106" y="168" width="1" height="2" fill="#555"/>
<rect x="1110" y="168" width="1" height="2" fill="#555"/>
<rect x="1114" y="162" width="1" height="8" fill="#555"/>
<rect x="1118" y="168" width="1" height="2" fill="#555"/>
<rect x="1121" y="168" width="1" height="2" fill="#555"/>
<rect x="1125" y="168" width="1" height="2" fill="#555"/>
<rect x="1129" y="168" width="1" height="2" fill="#555"/>
<rect x="1133" y="166" width="1" height="4" fill="#555"/>
<rect x="1136" y="168" width="1" height="2" fill="#555"/>
<rect x="1140" y="168" width="1" height="2" fill="#555"/>
<rect x="1144" y="168" width="1" height="2" fill="#555"/>
<rect x="1148" y="168" width="1" height="2" fill="#555"/>
<path d="M472 171h2v4h3v2h-5z" fill="#444"/>
<path d="M508 171h2v4h3v2h-5z" fill="#444"/>
<path d="M545 171h2v4h3v2h-5z" fill="#444"/>
<path d="M582 171h2v4h3v2h-5z" fill="#444"/>
<path d="M619 171h2v4h3v2h-5z" fill="#444"/>
<path d="M656 171h2v4h3v2h-5z" fill="#444"/>
<path d="M693 171h2v4h3v2h-5z" fill="#444"/>
<path d="M730 171h2v4h3v2h-5z" fill="#444"/>
<path d="M767 171h2v4h3v2h-5z" fill="#444"/>
<path d="M804 171h2v4h3v2h-5z" fill="#444"/>
<path d="M841 171h2v4h3v2h-5z" fill="#444"/>
<path d="M878 171h2v4h3v2h-5z" fill="#444"/>
<path d="M915 171h2v4h3v2h-5z" fill="#444"/>
<path d="M952 171h2v4h3v2h-5z" fill="#444"/>
<path d="M434 160L439 164.5H434Z M434 165.5H439V166.5L436.5 167.5L437.5 169.8L434.5 171Z" fill="#555"/>
<path d="M425 176h8M430.5 173.5l2.5 2.5l-2.5 2.5M434.5 173v6" fill="none" stroke="#555" stroke-width="1.3"/>
<path d="M1077 160L1072 165L1077 170z" fill="#555"/>
<path d="M1076.5 172v7M1077 175.5h7M1079.5 173l-2.5 2.5l2.5 2.5" fill="none" stroke="#555" stroke-width="1.3"/>
<rect x="208" y="179" width="14" height="657" fill="#fff"/>
<rect x="209" y="179" width="12" height="78" fill="#f3f3f3"/>
<rect x="212" y="183" width="8" height="1" fill="#555"/>
<rect x="218" y="187" width="2" height="1" fill="#555"/>
<rect x="218" y="190" width="2" height="1" fill="#555"/>
<rect x="218" y="194" width="2" height="1" fill="#555"/>
<rect x="218" y="198" width="2" height="1" fill="#555"/>
<rect x="216" y="202" width="4" height="1" fill="#555"/>
<rect x="218" y="205" width="2" height="1" fill="#555"/>
<rect x="218" y="209" width="2" height="1" fill="#555"/>
<rect x="218" y="213" width="2" height="1" fill="#555"/>
<rect x="218" y="217" width="2" height="1" fill="#555"/>
<rect x="212" y="221" width="8" height="1" fill="#555"/>
<rect x="218" y="224" width="2" height="1" fill="#555"/>
<rect x="218" y="228" width="2" height="1" fill="#555"/>
<rect x="218" y="232" width="2" height="1" fill="#555"/>
<rect x="218" y="236" width="2" height="1" fill="#555"/>
<rect x="216" y="240" width="4" height="1" fill="#555"/>
<rect x="218" y="243" width="2" height="1" fill="#555"/>
<rect x="218" y="247" width="2" height="1" fill="#555"/>
<rect x="218" y="251" width="2" height="1" fill="#555"/>
<rect x="218" y="255" width="2" height="1" fill="#555"/>
<rect x="212" y="258" width="8" height="1" fill="#555"/>
<rect x="218" y="262" width="2" height="1" fill="#555"/>
<rect x="218" y="266" width="2" height="1" fill="#555"/>
<rect x="218" y="270" width="2" height="1" fill="#555"/>
<rect x="218" y="274" width="2" height="1" fill="#555"/>
<rect x="216" y="277" width="4" height="1" fill="#555"/>
<rect x="218" y="281" width="2" height="1" fill="#555"/>
<rect x="218" y="285" width="2" height="1" fill="#555"/>
<rect x="218" y="289" width="2" height="1" fill="#555"/>
<rect x="218" y="292" width="2" height="1" fill="#555"/>
<rect x="212" y="296" width="8" height="1" fill="#555"/>
<rect x="218" y="300" width="2" height="1" fill="#555"/>
<rect x="218" y="304" width="2" height="1" fill="#555"/>
<rect x="218" y="308" width="2" height="1" fill="#555"/>
<rect x="218" y="311" width="2" height="1" fill="#555"/>
<rect x="216" y="315" width="4" height="1" fill="#555"/>
<rect x="218" y="319" width="2" height="1" fill="#555"/>
<rect x="218" y="323" width="2" height="1" fill="#555"/>
<rect x="218" y="326" width="2" height="1" fill="#555"/>
<rect x="218" y="330" width="2" height="1" fill="#555"/>
<rect x="212" y="334" width="8" height="1" fill="#555"/>
<rect x="218" y="338" width="2" height="1" fill="#555"/>
<rect x="218" y="342" width="2" height="1" fill="#555"/>
<rect x="218" y="345" width="2" height="1" fill="#555"/>
<rect x="218" y="349" width="2" height="1" fill="#555"/>
<rect x="216" y="353" width="4" height="1" fill="#555"/>
<rect x="218" y="357" width="2" height="1" fill="#555"/>
<rect x="218" y="360" width="2" height="1" fill="#555"/>
<rect x="218" y="364" width="2" height="1" fill="#555"/>
<rect x="218" y="368" width="2" height="1" fill="#555"/>
<rect x="212" y="372" width="8" height="1" fill="#555"/>
<rect x="218" y="376" width="2" height="1" fill="#555"/>
<rect x="218" y="379" width="2" height="1" fill="#555"/>
<rect x="218" y="383" width="2" height="1" fill="#555"/>
<rect x="218" y="387" width="2" height="1" fill="#555"/>
<rect x="216" y="391" width="4" height="1" fill="#555"/>
<rect x="218" y="394" width="2" height="1" fill="#555"/>
<rect x="218" y="398" width="2" height="1" fill="#555"/>
<rect x="218" y="402" width="2" height="1" fill="#555"/>
<rect x="218" y="406" width="2" height="1" fill="#555"/>
<rect x="212" y="410" width="8" height="1" fill="#555"/>
<rect x="218" y="413" width="2" height="1" fill="#555"/>
<rect x="218" y="417" width="2" height="1" fill="#555"/>
<rect x="218" y="421" width="2" height="1" fill="#555"/>
<rect x="218" y="425" width="2" height="1" fill="#555"/>
<rect x="216" y="428" width="4" height="1" fill="#555"/>
<rect x="218" y="432" width="2" height="1" fill="#555"/>
<rect x="218" y="436" width="2" height="1" fill="#555"/>
<rect x="218" y="440" width="2" height="1" fill="#555"/>
<rect x="218" y="444" width="2" height="1" fill="#555"/>
<rect x="212" y="447" width="8" height="1" fill="#555"/>
<rect x="218" y="451" width="2" height="1" fill="#555"/>
<rect x="218" y="455" width="2" height="1" fill="#555"/>
<rect x="218" y="459" width="2" height="1" fill="#555"/>
<rect x="218" y="462" width="2" height="1" fill="#555"/>
<rect x="216" y="466" width="4" height="1" fill="#555"/>
<rect x="218" y="470" width="2" height="1" fill="#555"/>
<rect x="218" y="474" width="2" height="1" fill="#555"/>
<rect x="218" y="478" width="2" height="1" fill="#555"/>
<rect x="218" y="481" width="2" height="1" fill="#555"/>
<rect x="212" y="485" width="8" height="1" fill="#555"/>
<rect x="218" y="489" width="2" height="1" fill="#555"/>
<rect x="218" y="493" width="2" height="1" fill="#555"/>
<rect x="218" y="497" width="2" height="1" fill="#555"/>
<rect x="218" y="500" width="2" height="1" fill="#555"/>
<rect x="216" y="504" width="4" height="1" fill="#555"/>
<rect x="218" y="508" width="2" height="1" fill="#555"/>
<rect x="218" y="512" width="2" height="1" fill="#555"/>
<rect x="218" y="515" width="2" height="1" fill="#555"/>
<rect x="218" y="519" width="2" height="1" fill="#555"/>
<rect x="212" y="523" width="8" height="1" fill="#555"/>
<rect x="218" y="527" width="2" height="1" fill="#555"/>
<rect x="218" y="531" width="2" height="1" fill="#555"/>
<rect x="218" y="534" width="2" height="1" fill="#555"/>
<rect x="218" y="538" width="2" height="1" fill="#555"/>
<rect x="216" y="542" width="4" height="1" fill="#555"/>
<rect x="218" y="546" width="2" height="1" fill="#555"/>
<rect x="218" y="549" width="2" height="1" fill="#555"/>
<rect x="218" y="553" width="2" height="1" fill="#555"/>
<rect x="218" y="557" width="2" height="1" fill="#555"/>
<rect x="212" y="561" width="8" height="1" fill="#555"/>
<rect x="218" y="565" width="2" height="1" fill="#555"/>
<rect x="218" y="568" width="2" height="1" fill="#555"/>
<rect x="218" y="572" width="2" height="1" fill="#555"/>
<rect x="218" y="576" width="2" height="1" fill="#555"/>
<rect x="216" y="580" width="4" height="1" fill="#555"/>
<rect x="218" y="583" width="2" height="1" fill="#555"/>
<rect x="218" y="587" width="2" height="1" fill="#555"/>
<rect x="218" y="591" width="2" height="1" fill="#555"/>
<rect x="218" y="595" width="2" height="1" fill="#555"/>
<rect x="212" y="599" width="8" height="1" fill="#555"/>
<rect x="218" y="602" width="2" height="1" fill="#555"/>
<rect x="218" y="606" width="2" height="1" fill="#555"/>
<rect x="218" y="610" width="2" height="1" fill="#555"/>
<rect x="218" y="614" width="2" height="1" fill="#555"/>
<rect x="216" y="617" width="4" height="1" fill="#555"/>
<rect x="218" y="621" width="2" height="1" fill="#555"/>
<rect x="218" y="625" width="2" height="1" fill="#555"/>
<rect x="218" y="629" width="2" height="1" fill="#555"/>
<rect x="218" y="633" width="2" height="1" fill="#555"/>
<rect x="212" y="636" width="8" height="1" fill="#555"/>
<rect x="218" y="640" width="2" height="1" fill="#555"/>
<rect x="218" y="644" width="2" height="1" fill="#555"/>
<rect x="218" y="648" width="2" height="1" fill="#555"/>
<rect x="218" y="651" width="2" height="1" fill="#555"/>
<rect x="216" y="655" width="4" height="1" fill="#555"/>
<rect x="218" y="659" width="2" height="1" fill="#555"/>
<rect x="218" y="663" width="2" height="1" fill="#555"/>
<rect x="218" y="667" width="2" height="1" fill="#555"/>
<rect x="218" y="670" width="2" height="1" fill="#555"/>
<rect x="212" y="674" width="8" height="1" fill="#555"/>
<rect x="218" y="678" width="2" height="1" fill="#555"/>
<rect x="218" y="682" width="2" height="1" fill="#555"/>
<rect x="218" y="685" width="2" height="1" fill="#555"/>
<rect x="218" y="689" width="2" height="1" fill="#555"/>
<rect x="216" y="693" width="4" height="1" fill="#555"/>
<rect x="218" y="697" width="2" height="1" fill="#555"/>
<rect x="218" y="701" width="2" height="1" fill="#555"/>
<rect x="218" y="704" width="2" height="1" fill="#555"/>
<rect x="218" y="708" width="2" height="1" fill="#555"/>
<rect x="212" y="712" width="8" height="1" fill="#555"/>
<rect x="218" y="716" width="2" height="1" fill="#555"/>
<rect x="218" y="719" width="2" height="1" fill="#555"/>
<rect x="218" y="723" width="2" height="1" fill="#555"/>
<rect x="218" y="727" width="2" height="1" fill="#555"/>
<rect x="216" y="731" width="4" height="1" fill="#555"/>
<rect x="218" y="735" width="2" height="1" fill="#555"/>
<rect x="218" y="738" width="2" height="1" fill="#555"/>
<rect x="218" y="742" width="2" height="1" fill="#555"/>
<rect x="218" y="746" width="2" height="1" fill="#555"/>
<rect x="212" y="750" width="8" height="1" fill="#555"/>
<rect x="218" y="754" width="2" height="1" fill="#555"/>
<rect x="218" y="757" width="2" height="1" fill="#555"/>
<rect x="218" y="761" width="2" height="1" fill="#555"/>
<rect x="218" y="765" width="2" height="1" fill="#555"/>
<rect x="216" y="769" width="4" height="1" fill="#555"/>
<rect x="218" y="772" width="2" height="1" fill="#555"/>
<rect x="218" y="776" width="2" height="1" fill="#555"/>
<rect x="218" y="780" width="2" height="1" fill="#555"/>
<rect x="218" y="784" width="2" height="1" fill="#555"/>
<rect x="212" y="788" width="8" height="1" fill="#555"/>
<rect x="218" y="791" width="2" height="1" fill="#555"/>
<rect x="218" y="795" width="2" height="1" fill="#555"/>
<rect x="218" y="799" width="2" height="1" fill="#555"/>
<rect x="218" y="803" width="2" height="1" fill="#555"/>
<rect x="216" y="806" width="4" height="1" fill="#555"/>
<rect x="218" y="810" width="2" height="1" fill="#555"/>
<rect x="218" y="814" width="2" height="1" fill="#555"/>
<rect x="218" y="818" width="2" height="1" fill="#555"/>
<rect x="218" y="822" width="2" height="1" fill="#555"/>
<rect x="212" y="825" width="8" height="1" fill="#555"/>
<rect x="218" y="829" width="2" height="1" fill="#555"/>
<rect x="218" y="833" width="2" height="1" fill="#555"/>
<path d="M226 249v7M223 254l3 3l3-3M223 258.5h6" fill="none" stroke="#555" stroke-width="1.3"/>
</svg>
<div class="a" style="left:359.5px;top:163px;font-size:9.5px;line-height:0;color:#555;letter-spacing:-1px">2</div>
<div class="a" style="left:397.5px;top:163px;font-size:9.5px;line-height:0;color:#555;letter-spacing:-1px">1</div>
<div class="a" style="left:472.5px;top:163px;font-size:9.5px;line-height:0;color:#555;letter-spacing:-1px">1</div>
<div class="a" style="left:510.5px;top:163px;font-size:9.5px;line-height:0;color:#555;letter-spacing:-1px">2</div>
<div class="a" style="left:548.5px;top:163px;font-size:9.5px;line-height:0;color:#555;letter-spacing:-1px">3</div>
<div class="a" style="left:586.5px;top:163px;font-size:9.5px;line-height:0;color:#555;letter-spacing:-1px">4</div>
<div class="a" style="left:623.5px;top:163px;font-size:9.5px;line-height:0;color:#555;letter-spacing:-1px">5</div>
<div class="a" style="left:661.5px;top:163px;font-size:9.5px;line-height:0;color:#555;letter-spacing:-1px">6</div>
<div class="a" style="left:699.5px;top:163px;font-size:9.5px;line-height:0;color:#555;letter-spacing:-1px">7</div>
<div class="a" style="left:737.5px;top:163px;font-size:9.5px;line-height:0;color:#555;letter-spacing:-1px">8</div>
<div class="a" style="left:775.5px;top:163px;font-size:9.5px;line-height:0;color:#555;letter-spacing:-1px">9</div>
<div class="a" style="left:812.5px;top:163px;font-size:9.5px;line-height:0;color:#555;letter-spacing:-1px">10</div>
<div class="a" style="left:850.5px;top:163px;font-size:9.5px;line-height:0;color:#555;letter-spacing:-1px">11</div>
<div class="a" style="left:888.5px;top:163px;font-size:9.5px;line-height:0;color:#555;letter-spacing:-1px">12</div>
<div class="a" style="left:926.5px;top:163px;font-size:9.5px;line-height:0;color:#555;letter-spacing:-1px">13</div>
<div class="a" style="left:964.5px;top:163px;font-size:9.5px;line-height:0;color:#555;letter-spacing:-1px">14</div>
<div class="a" style="left:1001.5px;top:163px;font-size:9.5px;line-height:0;color:#555;letter-spacing:-1px">15</div>
<div class="a" style="left:1039.5px;top:163px;font-size:9.5px;line-height:0;color:#555;letter-spacing:-1px">16</div>
<div class="a" style="left:1077.5px;top:163px;font-size:9.5px;line-height:0;color:#555;letter-spacing:-1px">17</div>
<div class="a" style="left:1115.5px;top:163px;font-size:9.5px;line-height:0;color:#555;letter-spacing:-1px">18</div>
<div class="a" style="left:209px;top:188.6px;font-size:9px;line-height:9px;color:#555;letter-spacing:-0.6px;transform-origin:0 0;transform:rotate(-90deg)">2</div>
<div class="a" style="left:209px;top:226.6px;font-size:9px;line-height:9px;color:#555;letter-spacing:-0.6px;transform-origin:0 0;transform:rotate(-90deg)">1</div>
<div class="a" style="left:209px;top:301.6px;font-size:9px;line-height:9px;color:#555;letter-spacing:-0.6px;transform-origin:0 0;transform:rotate(-90deg)">1</div>
<div class="a" style="left:209px;top:339.6px;font-size:9px;line-height:9px;color:#555;letter-spacing:-0.6px;transform-origin:0 0;transform:rotate(-90deg)">2</div>
<div class="a" style="left:209px;top:377.6px;font-size:9px;line-height:9px;color:#555;letter-spacing:-0.6px;transform-origin:0 0;transform:rotate(-90deg)">3</div>
<div class="a" style="left:209px;top:415.6px;font-size:9px;line-height:9px;color:#555;letter-spacing:-0.6px;transform-origin:0 0;transform:rotate(-90deg)">4</div>
<div class="a" style="left:209px;top:452.6px;font-size:9px;line-height:9px;color:#555;letter-spacing:-0.6px;transform-origin:0 0;transform:rotate(-90deg)">5</div>
<div class="a" style="left:209px;top:490.6px;font-size:9px;line-height:9px;color:#555;letter-spacing:-0.6px;transform-origin:0 0;transform:rotate(-90deg)">6</div>
<div class="a" style="left:209px;top:528.6px;font-size:9px;line-height:9px;color:#555;letter-spacing:-0.6px;transform-origin:0 0;transform:rotate(-90deg)">7</div>
<div class="a" style="left:209px;top:566.6px;font-size:9px;line-height:9px;color:#555;letter-spacing:-0.6px;transform-origin:0 0;transform:rotate(-90deg)">8</div>
<div class="a" style="left:209px;top:604.6px;font-size:9px;line-height:9px;color:#555;letter-spacing:-0.6px;transform-origin:0 0;transform:rotate(-90deg)">9</div>
<div class="a" style="left:209px;top:646.2px;font-size:9px;line-height:9px;color:#555;letter-spacing:-0.6px;transform-origin:0 0;transform:rotate(-90deg)">10</div>
<div class="a" style="left:209px;top:684.2px;font-size:9px;line-height:9px;color:#555;letter-spacing:-0.6px;transform-origin:0 0;transform:rotate(-90deg)">11</div>
<div class="a" style="left:209px;top:722.2px;font-size:9px;line-height:9px;color:#555;letter-spacing:-0.6px;transform-origin:0 0;transform:rotate(-90deg)">12</div>
<div class="a" style="left:209px;top:760.2px;font-size:9px;line-height:9px;color:#555;letter-spacing:-0.6px;transform-origin:0 0;transform:rotate(-90deg)">13</div>
<div class="a" style="left:209px;top:798.2px;font-size:9px;line-height:9px;color:#555;letter-spacing:-0.6px;transform-origin:0 0;transform:rotate(-90deg)">14</div>
<div class="a" style="left:209px;top:835.2px;font-size:9px;line-height:9px;color:#555;letter-spacing:-0.6px;transform-origin:0 0;transform:rotate(-90deg)">15</div>
<div style="letter-spacing:0">
<div class="a" style="left:434.5px;top:264px;font-size:9px;line-height:0;color:#000;letter-spacing:0.1px">Sample Company · Sample street 1245 · 12345 Sample town</div>
<div class="a" style="left:434.5px;top:278px;font-size:12px;line-height:0;color:#000">John Doe</div>
<div class="a" style="left:434.5px;top:291px;font-size:12px;line-height:0;color:#000">127 Anywhere Street</div>
<div class="a" style="left:434.5px;top:305px;font-size:12px;line-height:0;color:#000">12345 Anytown</div>
<div class="a" style="left:434.5px;top:346px;font-size:12px;line-height:0;color:#000">Delivery address:</div>
<div class="a" style="left:434.5px;top:360px;font-size:12px;line-height:0;color:#000">John Doe</div>
<div class="a" style="left:434.5px;top:373px;font-size:12px;line-height:0;color:#000">125 Anywhere Street</div>
<div class="a" style="left:434.5px;top:387px;font-size:12px;line-height:0;color:#000">12345 Anytown</div>
<div class="a" style="left:434.5px;top:429px;font-size:13px;line-height:0;color:#000;font-weight:bold;letter-spacing:0.1px">Part payment invoice&nbsp; IV201912/0015</div>
<div class="a" style="left:435.5px;top:460px;font-size:13px;line-height:0;color:#000;font-weight:bold;letter-spacing:0.1px">Subject: 1. part payment invoice - O201906/0058 -</div>
<div class="a" style="left:434.5px;top:488px;font-size:12px;line-height:0;color:#000">Dear Mr. Doe</div>
<div class="a" style="left:434.5px;top:516px;font-size:12px;line-height:0;color:#000">we invoice the following items and services:</div>
<div class="a" style="left:816px;top:276px;width:261px;height:201px;border:1px solid #c0c0c0;border-top:none"></div>
<div class="a" style="left:816px;top:276px;width:261px;height:167px;border:1px solid #000"></div>
<div class="a" style="left:818.5px;top:283px;font-size:12px;line-height:0;color:#000">Customer No.</div>
<div class="a" style="left:913.5px;top:283px;font-size:12px;line-height:0;color:#000">10000</div>
<div class="a" style="left:818.5px;top:297px;font-size:12px;line-height:0;color:#000">Project</div>
<div class="a" style="left:818.5px;top:310px;font-size:12px;line-height:0;color:#000">Order No.</div>
<div class="a" style="left:913.5px;top:310px;font-size:12px;line-height:0;color:#000">O201906/0061</div>
<div class="a" style="left:818.5px;top:324px;font-size:12px;line-height:0;color:#000">Delivery from</div>
<div class="a" style="left:818.5px;top:338px;font-size:12px;line-height:0;color:#000">Your subject</div>
<div class="a" style="left:818.5px;top:365px;font-size:12px;line-height:0;color:#000">Your contact</div>
<div class="a" style="left:913.5px;top:365px;font-size:12px;line-height:0;color:#000">Anton Admin</div>
<div class="a" style="left:818.5px;top:379px;font-size:12px;line-height:0;color:#000">EMail</div>
<div class="a" style="left:913.5px;top:379px;font-size:12px;line-height:0;color:#000">noreply@ingenious.de</div>
<div class="a" style="left:818.5px;top:392px;font-size:12px;line-height:0;color:#000">Phone</div>
<div class="a" style="left:913.5px;top:392px;font-size:12px;line-height:0;color:#000">0123/456789</div>
<div class="a" style="left:818.5px;top:406px;font-size:12px;line-height:0;color:#000">Fax</div>
<div class="a" style="left:913.5px;top:406px;font-size:12px;line-height:0;color:#000">0123/456780</div>
<div class="a" style="left:818.5px;top:436px;font-size:12px;line-height:0;color:#000">Date</div>
<div class="a" style="left:913.5px;top:435px;font-size:12px;line-height:0;color:#000">12/20/2019</div>
<div class="a" style="left:434px;top:536px;width:645px;height:34px;border:1px solid #000;border-width:1.5px 1.5px 1.5px 1.5px"></div>
<div class="a" style="left:439px;top:544.64px;font-size:12px;line-height:0;color:#000;font-weight:bold;letter-spacing:0.3px">PosNo</div>
<div class="a" style="left:485px;top:544.64px;font-size:12px;line-height:0;color:#000;font-weight:bold">ItemNo.</div>
<div class="a" style="left:534px;top:544.64px;font-size:12px;line-height:0;color:#000;font-weight:bold">Description</div>
<div class="a" style="left:436px;top:559.84px;font-size:12px;line-height:0;color:#000;font-weight:bold">.</div>
<div class="a" style="left:536px;top:558.09px;font-size:11px;line-height:0;color:#000;font-weight:bold">Width</div>
<div class="a" style="left:620px;top:558.09px;font-size:11px;line-height:0;color:#000;font-weight:bold">Height</div>
<div class="a" style="left:715px;top:558.09px;font-size:11px;line-height:0;color:#000;font-weight:bold">Surface</div>
<div class="a" style="left:812px;top:544.64px;font-size:12px;line-height:0;color:#000;font-weight:bold">Quantity</div>
<div class="a" style="right:673px;top:544.64px;font-size:12px;line-height:0;color:#000;font-weight:bold">SP €</div>
<div class="a" style="left:940px;top:544.64px;font-size:12px;line-height:0;color:#000;font-weight:bold">Rebate</div>
<div class="a" style="left:986px;top:544px;font-size:11px;line-height:0;color:#000;font-weight:bold">tax</div>
<div class="a" style="right:526px;top:544.64px;font-size:12px;line-height:0;color:#000;font-weight:bold">GP €</div>
<div class="a" style="left:439.5px;top:579.94px;font-size:12px;line-height:0;color:#000">001</div>
<div class="a" style="left:534px;top:579.94px;font-size:12px;line-height:0;color:#000;letter-spacing:0.05px">1. part (50% of net order value 21,410.54 $)</div>
<div class="a" style="right:742.5px;top:579.94px;font-size:12px;line-height:0;color:#000">1</div>
<div class="a" style="right:673px;top:579.94px;font-size:12px;line-height:0;color:#000">10,705.27</div>
<div class="a" style="right:599.5px;top:580px;font-size:11px;line-height:0;color:#000">0</div>
<div class="a" style="right:524.5px;top:579.94px;font-size:12px;line-height:0;color:#000">10,705.27</div>
<div class="a" style="left:434px;top:610px;width:645px;height:91px;border:1.5px solid #000"></div>
<div class="a" style="left:806.5px;top:610px;width:1.5px;height:91px;background:#000;"></div>
<div class="a" style="left:438.5px;top:624.64px;font-size:12px;line-height:0;color:#000;font-weight:bold">Payment terms:</div>
<div class="a" style="left:435px;top:644.54px;font-size:12px;line-height:0;color:#000">Within 7 days with 2.00% discount or within 14 days in total.</div>
<div class="a" style="left:812px;top:622.64px;font-size:12px;line-height:0;color:#000;font-weight:bold">Total net</div>
<div class="a" style="right:527px;top:622.64px;font-size:12px;line-height:0;color:#000;font-weight:bold">10,705.27</div>
<div class="a" style="left:812px;top:644.34px;font-size:12px;line-height:0;color:#000;letter-spacing:0.3px">VAT 0 %</div>
<div class="a" style="left:812px;top:665.34px;font-size:12px;line-height:0;color:#000;letter-spacing:0.3px">VAT 0 %</div>
<div class="a" style="left:901.5px;top:644px;font-size:11px;line-height:0;color:#000">on 0.00 €</div>
<div class="a" style="left:901.5px;top:665px;font-size:11px;line-height:0;color:#000">on 0.00 €</div>
<div class="a" style="right:527px;top:644.34px;font-size:12px;line-height:0;color:#000">0.00</div>
<div class="a" style="right:527px;top:665.34px;font-size:12px;line-height:0;color:#000">0.00</div>
<div class="a" style="left:812px;top:688.34px;font-size:12px;line-height:0;color:#000;font-weight:bold;letter-spacing:0.2px">Gross total</div>
<div class="a" style="right:527px;top:688.34px;font-size:12px;line-height:0;color:#000;font-weight:bold">10,705.27</div>
</div>
<div class="a" style="left:1299px;top:154px;width:280px;height:682px;background:#dcdcdc;"></div>
<div class="a" style="left:1579px;top:154px;width:18px;height:682px;background:#f0f0f0;"></div>
<div class="a" style="left:1597px;top:153px;width:1px;height:718px;background:#bdbdbd;"></div>
<svg style="left:1585px;top:159px" width="8" height="5"><path d="M0 4.5L4 0.5L8 4.5z" fill="#666"/></svg>
<div class="a" style="left:1585px;top:171px;width:7px;height:461px;border:1px solid #9a9aa4;border-radius:4px;background:linear-gradient(90deg,#e8e8ee,#d0d0d8)"></div>
<svg style="left:1585px;top:824px" width="8" height="5"><path d="M0 0.5L4 4.5L8 0.5z" fill="#666"/></svg>
<div class="a" style="left:1299px;top:154px;width:280px;height:1px;background:#b4b4b4;"></div>
<div class="a" style="left:1318px;top:164.69px;font-size:11px;line-height:0;color:#1a1a1a;font-weight:bold;letter-spacing:0.2px">Miscellaneous</div>
<svg style="left:1564px;top:162px" width="10" height="6"><path d="M1 5L5 1L9 5" fill="none" stroke="#888" stroke-width="1.3"/></svg>
<div class="a" style="left:1299px;top:154px;width:280px;height:1px;background:#f0f0f0;"></div>
<div class="a" style="left:1314px;top:175px;width:265px;height:229px;background:#f0f0f0;"></div>
<div class="a" style="left:1440px;top:175px;width:139px;height:229px;background:#fff;"></div>
<div class="a" style="left:1314px;top:175px;width:265px;height:1px;background:#ababab;"></div>
<div class="a" style="left:1314px;top:175px;width:1px;height:229px;background:#ababab;"></div>
<div class="a" style="left:1439px;top:175px;width:1px;height:229px;background:#b8b8b8;"></div>
<div class="a" style="left:1315px;top:194px;width:264px;height:1px;background:#c0c0c0;"></div>
<div class="a" style="left:1332px;top:184.69px;font-size:11px;line-height:0;color:#1414f0;letter-spacing:0px">Name</div>
<div class="a" style="left:1444px;top:184.69px;font-size:11px;line-height:0;color:#7c7c84;letter-spacing:-0.2px">Part payment invoice</div>
<div class="a" style="left:1315px;top:213px;width:264px;height:1px;background:#c0c0c0;"></div>
<div class="a" style="left:1332px;top:203.69px;font-size:11px;line-height:0;color:#1414f0;letter-spacing:0px">Number</div>
<div class="a" style="left:1444px;top:203.69px;font-size:11px;line-height:0;color:#7c7c84;letter-spacing:-0.2px">IV201912/0015</div>
<div class="a" style="left:1315px;top:232px;width:264px;height:1px;background:#c0c0c0;"></div>
<div class="a" style="left:1332px;top:222.69px;font-size:11px;line-height:0;color:#000;letter-spacing:0px">Project</div>
<svg style="left:1566px;top:221px" width="8" height="5"><path d="M0 0h8l-4 4z" fill="#111"/></svg>
<div class="a" style="left:1315px;top:251px;width:264px;height:1px;background:#c0c0c0;"></div>
<div class="a" style="left:1332px;top:241.69px;font-size:11px;line-height:0;color:#000;letter-spacing:0px">Printed on</div>
<div class="a" style="left:1444px;top:241.69px;font-size:11px;line-height:0;color:#000;letter-spacing:-0.2px">12/20/2019</div>
<svg style="left:1566px;top:240px" width="8" height="5"><path d="M0 0h8l-4 4z" fill="#111"/></svg>
<div class="a" style="left:1315px;top:270px;width:264px;height:1px;background:#c0c0c0;"></div>
<div class="a" style="left:1332px;top:260.69px;font-size:11px;line-height:0;color:#1414f0;letter-spacing:0px">Contact</div>
<div class="a" style="left:1444px;top:260.69px;font-size:11px;line-height:0;color:#7c7c84;letter-spacing:-0.2px">Doe, John</div>
<svg style="left:1565px;top:260px" width="10" height="2"><rect x="0" y="0" width="2" height="2" fill="#111"/><rect x="4" y="0" width="2" height="2" fill="#111"/><rect x="8" y="0" width="2" height="2" fill="#111"/></svg>
<div class="a" style="left:1315px;top:289px;width:264px;height:1px;background:#c0c0c0;"></div>
<div class="a" style="left:1332px;top:279.69px;font-size:11px;line-height:0;color:#1414f0;letter-spacing:0px">Project template</div>
<div class="a" style="left:1444px;top:279.69px;font-size:11px;line-height:0;color:#7c7c84;letter-spacing:-0.2px">Invoice</div>
<svg style="left:1566px;top:278px" width="8" height="5"><path d="M0 0h8l-4 4z" fill="#111"/></svg>
<div class="a" style="left:1315px;top:308px;width:264px;height:1px;background:#c0c0c0;"></div>
<div class="a" style="left:1332px;top:298.69px;font-size:11px;line-height:0;color:#000;letter-spacing:0px">Contact person</div>
<div class="a" style="left:1444px;top:298.69px;font-size:11px;line-height:0;color:#000;letter-spacing:-0.2px">Anton Admin</div>
<svg style="left:1566px;top:297px" width="8" height="5"><path d="M0 0h8l-4 4z" fill="#111"/></svg>
<div class="a" style="left:1315px;top:327px;width:264px;height:1px;background:#c0c0c0;"></div>
<div class="a" style="left:1332px;top:317.69px;font-size:11px;line-height:0;color:#000;letter-spacing:0px">Representative</div>
<div class="a" style="left:1444px;top:317.69px;font-size:11px;line-height:0;color:#000;letter-spacing:-0.2px">Ronald Rich</div>
<svg style="left:1566px;top:316px" width="8" height="5"><path d="M0 0h8l-4 4z" fill="#111"/></svg>
<div class="a" style="left:1315px;top:346px;width:264px;height:1px;background:#c0c0c0;"></div>
<div class="a" style="left:1332px;top:336.69px;font-size:11px;line-height:0;color:#000;letter-spacing:0px">Trip</div>
<div class="a" style="left:1444px;top:336.69px;font-size:11px;line-height:0;color:#000;letter-spacing:-0.2px">Wednesday</div>
<svg style="left:1566px;top:335px" width="8" height="5"><path d="M0 0h8l-4 4z" fill="#111"/></svg>
<div class="a" style="left:1315px;top:365px;width:264px;height:1px;background:#c0c0c0;"></div>
<div class="a" style="left:1332px;top:355.69px;font-size:11px;line-height:0;color:#000;letter-spacing:0px">Project state</div>
<svg style="left:1566px;top:354px" width="8" height="5"><path d="M0 0h8l-4 4z" fill="#111"/></svg>
<div class="a" style="left:1315px;top:384px;width:264px;height:1px;background:#c0c0c0;"></div>
<div class="a" style="left:1332px;top:374.69px;font-size:11px;line-height:0;color:#000;letter-spacing:0px">Project text</div>
<svg style="left:1566px;top:373px" width="8" height="5"><path d="M0 0h8l-4 4z" fill="#111"/></svg>
<div class="a" style="left:1315px;top:403px;width:264px;height:1px;background:#c0c0c0;"></div>
<div class="a" style="left:1332px;top:393.69px;font-size:11px;line-height:0;color:#000;letter-spacing:0px">Notes</div>
<svg style="left:1566px;top:392px" width="8" height="5"><path d="M0 0h8l-4 4z" fill="#111"/></svg>
<div class="a" style="left:1299px;top:403px;width:280px;height:1px;background:#b4b4b4;"></div>
<div class="a" style="left:1318px;top:413.69px;font-size:11px;line-height:0;color:#1a1a1a;font-weight:bold;letter-spacing:0.2px">Addresses</div>
<svg style="left:1564px;top:411px" width="10" height="6"><path d="M1 1L5 5L9 1" fill="none" stroke="#888" stroke-width="1.3"/></svg>
<div class="a" style="left:1299px;top:424px;width:280px;height:1px;background:#b4b4b4;"></div>
<div class="a" style="left:1318px;top:434.69px;font-size:11px;line-height:0;color:#1a1a1a;font-weight:bold;letter-spacing:0.2px">Amounts</div>
<svg style="left:1564px;top:432px" width="10" height="6"><path d="M1 5L5 1L9 5" fill="none" stroke="#888" stroke-width="1.3"/></svg>
<div class="a" style="left:1314px;top:445px;width:265px;height:343px;background:#f0f0f0;"></div>
<div class="a" style="left:1440px;top:445px;width:139px;height:343px;background:#fff;"></div>
<div class="a" style="left:1314px;top:445px;width:265px;height:1px;background:#ababab;"></div>
<div class="a" style="left:1314px;top:445px;width:1px;height:343px;background:#ababab;"></div>
<div class="a" style="left:1439px;top:445px;width:1px;height:343px;background:#b8b8b8;"></div>
<div class="a" style="left:1315px;top:464px;width:264px;height:1px;background:#c0c0c0;"></div>
<div class="a" style="left:1332px;top:454.69px;font-size:11px;line-height:0;color:#7c7c84;letter-spacing:0px">Purchase price</div>
<div class="a" style="right:25px;top:454.69px;font-size:11px;line-height:0;color:#7c7c84;letter-spacing:-0.1px">$0.00</div>
<div class="a" style="left:1315px;top:483px;width:264px;height:1px;background:#c0c0c0;"></div>
<div class="a" style="left:1332px;top:473.69px;font-size:11px;line-height:0;color:#1414f0;letter-spacing:0px">Net price</div>
<div class="a" style="right:25px;top:473.69px;font-size:11px;line-height:0;color:#7c7c84;letter-spacing:-0.1px">$10,705.27</div>
<div class="a" style="left:1315px;top:502px;width:264px;height:1px;background:#c0c0c0;"></div>
<div class="a" style="left:1332px;top:492.69px;font-size:11px;line-height:0;color:#1414f0;letter-spacing:0px">Gross price</div>
<div class="a" style="right:25px;top:492.69px;font-size:11px;line-height:0;color:#7c7c84;letter-spacing:-0.1px">$10,705.27</div>
<div class="a" style="left:1315px;top:521px;width:264px;height:1px;background:#c0c0c0;"></div>
<div class="a" style="left:1332px;top:511.69px;font-size:11px;line-height:0;color:#1414f0;letter-spacing:0px">VAT</div>
<div class="a" style="right:25px;top:511.69px;font-size:11px;line-height:0;color:#7c7c84;letter-spacing:-0.1px">$0.00</div>
<svg style="left:1317px;top:511px" width="8" height="5"><path d="M0 0h8l-4 4z" fill="#777"/></svg>
<div class="a" style="left:1315px;top:540px;width:264px;height:1px;background:#c0c0c0;"></div>
<div class="a" style="left:1348px;top:530.69px;font-size:11px;line-height:0;color:#7c7c84;letter-spacing:0px">VAT 0%</div>
<div class="a" style="right:25px;top:530.69px;font-size:11px;line-height:0;color:#7c7c84;letter-spacing:-0.1px">$0.00</div>
<div class="a" style="left:1315px;top:559px;width:264px;height:1px;background:#c0c0c0;"></div>
<div class="a" style="left:1348px;top:549.69px;font-size:11px;line-height:0;color:#7c7c84;letter-spacing:0px">VAT 0%</div>
<div class="a" style="right:25px;top:549.69px;font-size:11px;line-height:0;color:#7c7c84;letter-spacing:-0.1px">$0.00</div>
<div class="a" style="left:1315px;top:578px;width:264px;height:1px;background:#c0c0c0;"></div>
<div class="a" style="left:1332px;top:568.69px;font-size:11px;line-height:0;color:#7c7c84;letter-spacing:0px">Calculated time</div>
<div class="a" style="right:25px;top:568.69px;font-size:11px;line-height:0;color:#7c7c84;letter-spacing:-0.1px">0 min</div>
<div class="a" style="left:1315px;top:597px;width:264px;height:1px;background:#c0c0c0;"></div>
<div class="a" style="left:1332px;top:587.69px;font-size:11px;line-height:0;color:#7c7c84;letter-spacing:0px">Commission</div>
<div class="a" style="right:25px;top:587.69px;font-size:11px;line-height:0;color:#7c7c84;letter-spacing:-0.1px">$0.00</div>
<div class="a" style="left:1315px;top:616px;width:264px;height:1px;background:#c0c0c0;"></div>
<div class="a" style="left:1332px;top:606.69px;font-size:11px;line-height:0;color:#000;letter-spacing:0px">Use SP2</div>
<div class="a" style="left:1503px;top:600px;width:13px;height:13px;border:1px solid #9a9aa4;background:#fff;box-shadow:inset 0 0 0 1px #dcdce4"></div>
<div class="a" style="left:1315px;top:635px;width:264px;height:1px;background:#c0c0c0;"></div>
<div class="a" style="left:1332px;top:625.69px;font-size:11px;line-height:0;color:#000;letter-spacing:0px">Use customer disco...</div>
<div class="a" style="left:1503px;top:619px;width:13px;height:13px;border:1px solid #9a9aa4;background:#fff;box-shadow:inset 0 0 0 1px #dcdce4"></div>
<svg style="left:1504px;top:616px" width="14" height="15"><path d="M1.5 9L5 13.5L12.5 1.5" fill="none" stroke="#1a1a2a" stroke-width="2"/></svg>
<div class="a" style="left:1315px;top:654px;width:264px;height:1px;background:#c0c0c0;"></div>
<div class="a" style="left:1332px;top:644.69px;font-size:11px;line-height:0;color:#000;letter-spacing:0px">Cash discount</div>
<div class="a" style="left:1503px;top:638px;width:13px;height:13px;border:1px solid #9a9aa4;background:#fff;box-shadow:inset 0 0 0 1px #dcdce4"></div>
<svg style="left:1504px;top:635px" width="14" height="15"><path d="M1.5 9L5 13.5L12.5 1.5" fill="none" stroke="#1a1a2a" stroke-width="2"/></svg>
<div class="a" style="left:1315px;top:673px;width:264px;height:1px;background:#c0c0c0;"></div>
<div class="a" style="left:1332px;top:663.69px;font-size:11px;line-height:0;color:#7c7c84;letter-spacing:0px">Contribution margin</div>
<div class="a" style="right:25px;top:663.69px;font-size:11px;line-height:0;color:#7c7c84;letter-spacing:-0.1px">$10,491.16</div>
<div class="a" style="left:1315px;top:692px;width:264px;height:1px;background:#c0c0c0;"></div>
<div class="a" style="left:1332px;top:682.69px;font-size:11px;line-height:0;color:#7c7c84;letter-spacing:0px">Rel. Contribution m...</div>
<div class="a" style="right:25px;top:682.69px;font-size:11px;line-height:0;color:#7c7c84;letter-spacing:-0.1px">$0.00 / Hour</div>
<div class="a" style="left:1315px;top:711px;width:264px;height:1px;background:#c0c0c0;"></div>
<div class="a" style="left:1332px;top:701.69px;font-size:11px;line-height:0;color:#7c7c84;letter-spacing:0px">Contibution margin ...</div>
<div class="a" style="right:25px;top:701.69px;font-size:11px;line-height:0;color:#7c7c84;letter-spacing:-0.1px">100 %</div>
<div class="a" style="left:1315px;top:730px;width:264px;height:1px;background:#c0c0c0;"></div>
<div class="a" style="left:1332px;top:720.69px;font-size:11px;line-height:0;color:#7c7c84;letter-spacing:0px">Contibution margin ...</div>
<div class="a" style="right:25px;top:720.69px;font-size:11px;line-height:0;color:#7c7c84;letter-spacing:-0.1px">0 %</div>
<div class="a" style="left:1315px;top:749px;width:264px;height:1px;background:#c0c0c0;"></div>
<div class="a" style="left:1332px;top:739.69px;font-size:11px;line-height:0;color:#000;letter-spacing:0px">Show finalcost.</div>
<div class="a" style="left:1503px;top:733px;width:13px;height:13px;border:1px solid #9a9aa4;background:#fff;box-shadow:inset 0 0 0 1px #dcdce4"></div>
<div class="a" style="left:1315px;top:768px;width:264px;height:1px;background:#c0c0c0;"></div>
<div class="a" style="left:1332px;top:758.69px;font-size:11px;line-height:0;color:#7c7c84;letter-spacing:0px">Finalcost. PP</div>
<div class="a" style="right:25px;top:758.69px;font-size:11px;line-height:0;color:#7c7c84;letter-spacing:-0.1px">$0.00</div>
<div class="a" style="left:1315px;top:787px;width:264px;height:1px;background:#c0c0c0;"></div>
<div class="a" style="left:1332px;top:777.69px;font-size:11px;line-height:0;color:#7c7c84;letter-spacing:0px">Finalcost. Time</div>
<div class="a" style="right:25px;top:777.69px;font-size:11px;line-height:0;color:#7c7c84;letter-spacing:-0.1px">0 min</div>
<div class="a" style="left:1299px;top:787px;width:280px;height:1px;background:#b4b4b4;"></div>
<div class="a" style="left:1318px;top:797.69px;font-size:11px;line-height:0;color:#1a1a1a;font-weight:bold;letter-spacing:0.2px">History</div>
<svg style="left:1564px;top:795px" width="10" height="6"><path d="M1 5L5 1L9 5" fill="none" stroke="#888" stroke-width="1.3"/></svg>
<div class="a" style="left:1314px;top:808px;width:265px;height:39px;background:#f0f0f0;"></div>
<div class="a" style="left:1440px;top:808px;width:139px;height:39px;background:#fff;"></div>
<div class="a" style="left:1314px;top:808px;width:265px;height:1px;background:#ababab;"></div>
<div class="a" style="left:1314px;top:808px;width:1px;height:39px;background:#ababab;"></div>
<div class="a" style="left:1439px;top:808px;width:1px;height:39px;background:#b8b8b8;"></div>
<div class="a" style="left:1315px;top:827px;width:264px;height:1px;background:#c0c0c0;"></div>
<div class="a" style="left:1332px;top:817.69px;font-size:11px;line-height:0;color:#7c7c84;letter-spacing:0px">Quotation</div>
<div class="a" style="left:1444px;top:817.69px;font-size:11px;line-height:0;color:#7c7c84;letter-spacing:-0.2px">Q201906/0031</div>
<svg style="left:1565px;top:817px" width="10" height="2"><rect x="0" y="0" width="2" height="2" fill="#111"/><rect x="4" y="0" width="2" height="2" fill="#111"/><rect x="8" y="0" width="2" height="2" fill="#111"/></svg>
<div class="a" style="left:1315px;top:846px;width:264px;height:1px;background:#c0c0c0;"></div>
<div class="a" style="left:1332px;top:836.69px;font-size:11px;line-height:0;color:#7c7c84;letter-spacing:0px">*Orderconfirmation</div>
<div class="a" style="left:1444px;top:836.69px;font-size:11px;line-height:0;color:#7c7c84;letter-spacing:-0.2px">O201906/0056</div>
<div class="a" style="left:1298px;top:836px;width:299px;height:35px;background:#f7f7f7;"></div>
<div class="a" style="left:204px;top:836px;width:1093px;height:35px;background:#f7f7f7;"></div>
<div class="a" style="left:226.5px;top:854.59px;font-size:11px;line-height:0;color:#111;letter-spacing:-0.1px">created</div>
<div class="a" style="left:337px;top:845px;width:175px;height:21px;border:1px solid #7a7a7a;background:#f7f7f7"></div>
<div class="a" style="left:341px;top:854.59px;font-size:11px;line-height:0;color:#111;letter-spacing:-0.2px">12/20/2019 9:42:27 AM - admin</div>
<div class="a" style="left:614px;top:854.59px;font-size:11px;line-height:0;color:#111;letter-spacing:-0.1px">Modified</div>
<div class="a" style="left:684px;top:845px;width:175px;height:21px;border:1px solid #7a7a7a;background:#f7f7f7"></div>
<div class="a" style="left:688px;top:854.59px;font-size:11px;line-height:0;color:#111;letter-spacing:-0.2px">12/20/2019 9:42:27 AM - admin</div>
<div class="a" style="left:0px;top:871px;width:1600px;height:29px;background:#f7f7f7;"></div>
<div class="a" style="left:2px;top:871px;width:106px;height:1px;background:#c8c8c8;"></div>
<div class="a" style="left:313px;top:871px;width:1285px;height:1px;background:#c8c8c8;"></div>
<div class="a" style="left:108px;top:871px;width:1px;height:27px;background:#c8c8c8;"></div>
<div class="a" style="left:312px;top:871px;width:1px;height:27px;background:#c8c8c8;"></div>
<div class="a" style="left:108px;top:895px;width:205px;height:2px;background:#2a72c0;"></div>
<div class="a" style="left:13.5px;top:884.19px;font-size:11px;line-height:0;color:#444;letter-spacing:0.1px">Projects [2 / 311]</div>
<div class="a" style="left:119.5px;top:884.19px;font-size:11px;line-height:0;color:#2a72b8;letter-spacing:0px">Part payment invoice&nbsp; IV201912/0015</div>
<svg style="left:1584px;top:884px" width="8" height="5"><path d="M0 0h8l-4 4z" fill="#666"/></svg>
</body></html>
